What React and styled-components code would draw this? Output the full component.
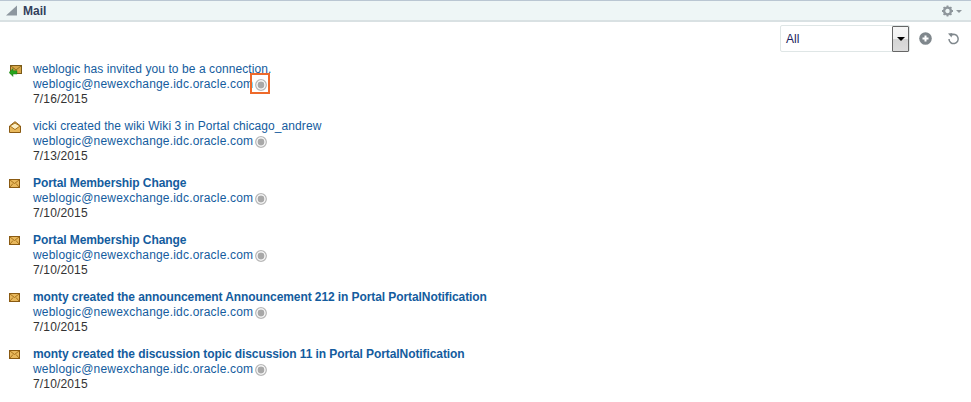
import React from "react";
import styled, { createGlobalStyle } from "styled-components";

const Global = createGlobalStyle`
  html, body { margin: 0; padding: 0; background: #fff; }
  body { font-family: "Liberation Sans", Arial, sans-serif; font-size: 12px; }
`;
const Page = styled.div`
  width: 971px; height: 402px; overflow: hidden; background: #fff;
`;
const Header = styled.div`
  height: 19px; display: flex; align-items: center; justify-content: space-between;
  background: #eef6f6; border-top: 1px solid #b9c6d2; border-bottom: 2px solid #d9e1e3;
  padding: 0 8px 0 6px;
`;
const HeaderLeft = styled.div`display: flex; align-items: center; gap: 6px;`;
const Title = styled.span`font-weight: bold; font-size: 12px; color: #33405c;`;
const Toolbar = styled.div`
  height: 27px; margin-top: 3px; padding-right: 11px;
  display: flex; align-items: center; justify-content: flex-end;
`;
const Select = styled.div`
  width: 130px; height: 27px; box-sizing: border-box; margin-right: 9px;
  display: flex; justify-content: space-between; align-items: center;
  border: 1px solid #dfe6e6; border-radius: 2px; padding-left: 5px; color: #1c1c5c; font-size: 12px;
`;
const SelectButton = styled.div`
  width: 17px; height: 26px; box-sizing: border-box; border: 1px solid #666;
  border-radius: 1px; background: linear-gradient(#f6f6f6 0%, #f0f0f0 50%, #d4d4d4 51%, #dcdcdc 100%);
  display: flex; align-items: center; justify-content: center;
  &::after { content: ""; border: 4px solid transparent; border-top: 4px solid #000; border-bottom: 0; }
`;
const IconSlot = styled.span`display: inline-flex; margin-left: ${p => p.$ml || 0}px;`;
const List = styled.div`padding: 10px 0 0 9px;`;
const Item = styled.div`
  display: flex; height: 57px;
`;
const IconCol = styled.div`width: 24px; flex: none; padding-top: ${p => p.$top}px;`;
const Body = styled.div`font-size: 12px; line-height: 15px;`;
const Subject = styled.div`
  color: #145c9e; white-space: nowrap;
  font-weight: ${p => (p.$unread ? "bold" : "normal")};
  letter-spacing: ${p => (p.$unread ? "-0.085px" : "0.08px")};
`;
const Sender = styled.div`color: #145c9e; display: flex; align-items: center; height: 15px; letter-spacing: 0.19px;`;
const DateLine = styled.div`color: #333; letter-spacing: 0.15px;`;
const Presence = styled.span`
  position: relative; display: inline-flex; margin-left: 2px;
  ${p => p.$marked && `
    &::after { content: ""; position: absolute; left: -5px; top: -6px; width: 20px; height: 21px; box-sizing: border-box; border: 2px solid #ee6a2b; }
  `}
`;

const Triangle = () => (
  <svg width="11" height="11" viewBox="0 0 11 11"><path d="M0 10.5 L11 .5 V10.5 Z" fill="#8d979f" /></svg>
);
const Gear = () => (
  <svg width="21" height="12" viewBox="0 0 21 12">
    <circle cx="5.5" cy="6" r="3.4" fill="none" stroke="#8f979c" strokeWidth="2.4" />
    <path d="M5.5 .5v2M5.5 9.5v2M0 6h2M9 6h2M1.6 2.1l1.4 1.4M8 8.5l1.4 1.4M1.6 9.9L3 8.5M8 3.5l1.4-1.4" stroke="#8f979c" strokeWidth="1.8" />
    <path d="M14 5h6l-3 3z" fill="#8f979c" />
  </svg>
);
const Plus = () => (
  <svg width="13" height="13" viewBox="0 0 13 13">
    <circle cx="6.5" cy="6.5" r="6.3" fill="#7f878c" />
    <path d="M6.5 3.5v6M3.5 6.5h6" stroke="#fff" strokeWidth="2" />
  </svg>
);
const Refresh = () => (
  <svg width="13" height="13" viewBox="0 0 13 13" fill="none">
    <path d="M4 3.2 A4.6 4.6 0 1 1 2 7" stroke="#7f878c" strokeWidth="1.5" />
    <path d="M1 1.5 L5.5 1 L4.5 5.5 Z" fill="#7f878c" />
  </svg>
);
const Dot = () => (
  <svg width="12" height="12" viewBox="0 0 12 12" style={{ display: "block" }}>
    <circle cx="6" cy="6" r="5.3" fill="#fff" stroke="#b8b8b8" strokeWidth="1.3" />
    <circle cx="6" cy="6" r="3.4" fill="#a8a8a8" />
  </svg>
);
const Closed = () => (
  <svg width="11" height="9" viewBox="0 0 11 9" style={{ display: "block" }}>
    <rect x=".5" y=".5" width="10" height="8" fill="#e8b85c" stroke="#8a5a12" />
    <path d="M1 1l4.5 3.5L10 1M1 8l3-3.5M10 8L7 4.5" stroke="#a8741e" fill="none" />
  </svg>
);
const Open = () => (
  <svg width="12" height="12" viewBox="0 0 12 12" style={{ display: "block" }}>
    <path d="M.5 5L6 .7 11.5 5v6.5H.5z" fill="#e8b85c" stroke="#8a5a12" />
    <path d="M1 5l5 3.6L11 5L6 2z" stroke="#a8741e" fill="#fbeec4" />
  </svg>
);
const Reply = () => (
  <svg width="13" height="12" viewBox="0 0 13 12" style={{ display: "block" }}>
    <rect x="1.5" y=".5" width="11" height="8" fill="#d6a548" stroke="#7a5a18" />
    <path d="M2 1l5 4 5-4" stroke="#94701e" fill="none" />
    <path d="M0 7.5L4 3.5v2.2h4v3.4H4v2.4z" fill="#27a51e" stroke="#14670f" strokeWidth=".4" />
  </svg>
);

const sender = "weblogic@newexchange.idc.oracle.com";
const rows = [
  { icon: <Reply />, top: 3, subject: "weblogic has invited you to be a connection.", date: "7/16/2015", marked: true },
  { icon: <Open />, top: 2, subject: "vicki created the wiki Wiki 3 in Portal chicago_andrew", date: "7/13/2015" },
  { icon: <Closed />, top: 3, subject: "Portal Membership Change", date: "7/10/2015", unread: true },
  { icon: <Closed />, top: 3, subject: "Portal Membership Change", date: "7/10/2015", unread: true },
  { icon: <Closed />, top: 3, subject: "monty created the announcement Announcement 212 in Portal PortalNotification", date: "7/10/2015", unread: true },
  { icon: <Closed />, top: 3, subject: "monty created the discussion topic discussion 11 in Portal PortalNotification", date: "7/10/2015", unread: true },
];

export default function App() {
  return (
    <Page>
      <Global />
      <Header>
        <HeaderLeft><Triangle /><Title>Mail</Title></HeaderLeft>
        <Gear />
      </Header>
      <Toolbar>
        <Select>All<SelectButton /></Select>
        <IconSlot><Plus /></IconSlot>
        <IconSlot $ml={15}><Refresh /></IconSlot>
      </Toolbar>
      <List>
        {rows.map((r, i) => (
          <Item key={i}>
            <IconCol $top={r.top}>{r.icon}</IconCol>
            <Body>
              <Subject $unread={r.unread}>{r.subject}</Subject>
              <Sender>{sender}<Presence $marked={r.marked}><Dot /></Presence></Sender>
              <DateLine>{r.date}</DateLine>
            </Body>
          </Item>
        ))}
      </List>
    </Page>
  );
}
